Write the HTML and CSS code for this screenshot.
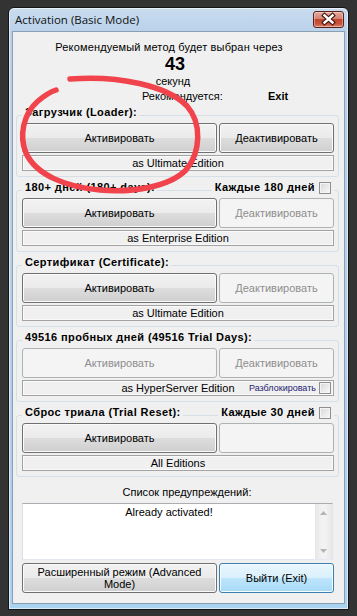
FILE: index.html
```html
<!DOCTYPE html>
<html>
<head>
<meta charset="utf-8">
<link rel="stylesheet" href="styles.css">
</head>
<body>
<div class="screen">
  <div class="window">
    <div class="titlebar">
      <span class="title">Activation (Basic Mode)</span>
      <div class="close">
        <svg width="29" height="15" viewBox="0 0 29 15">
          <path d="M10.5 3.5 L18.5 10.5 M18.5 3.5 L10.5 10.5" stroke="#3d1510" stroke-width="4.6" stroke-linecap="square" fill="none"/>
          <path d="M10.5 3.5 L18.5 10.5 M18.5 3.5 L10.5 10.5" stroke="#ffffff" stroke-width="2.4" stroke-linecap="square" fill="none"/>
        </svg>
      </div>
    </div>
    <div class="client">
      <div class="countdown">
        <div class="cd-line1">Рекомендуемый метод будет выбран через</div>
        <div class="cd-num">43</div>
        <div class="cd-unit">секунд</div>
        <div class="cd-rec"><span class="cd-rec-label">Рекомендуется:</span><b>Exit</b></div>
      </div>

      <div class="group group-first">
        <div class="group-head"><span class="group-title">Загрузчик (Loader):</span></div>
        <div class="btn-row">
          <div class="btn btn-wide">Активировать</div>
          <div class="btn btn-narrow">Деактивировать</div>
        </div>
        <div class="edition">as Ultimate Edition</div>
      </div>

      <div class="group">
        <div class="group-head">
          <span class="group-title">180+ дней (180+ days):</span>
          <span class="group-opt">Каждые 180 дней<span class="check"></span></span>
        </div>
        <div class="btn-row">
          <div class="btn btn-wide">Активировать</div>
          <div class="btn btn-narrow btn-disabled">Деактивировать</div>
        </div>
        <div class="edition">as Enterprise Edition</div>
      </div>

      <div class="group">
        <div class="group-head"><span class="group-title">Сертификат (Certificate):</span></div>
        <div class="btn-row">
          <div class="btn btn-wide">Активировать</div>
          <div class="btn btn-narrow btn-disabled">Деактивировать</div>
        </div>
        <div class="edition">as Ultimate Edition</div>
      </div>

      <div class="group">
        <div class="group-head"><span class="group-title">49516 пробных дней (49516 Trial Days):</span></div>
        <div class="btn-row">
          <div class="btn btn-wide btn-disabled">Активировать</div>
          <div class="btn btn-narrow btn-disabled">Деактивировать</div>
        </div>
        <div class="edition edition-unlock">as HyperServer Edition
          <span class="unlock">Разблокировать<span class="check"></span></span>
        </div>
      </div>

      <div class="group">
        <div class="group-head">
          <span class="group-title">Сброс триала (Trial Reset):</span>
          <span class="group-opt">Каждые 30 дней<span class="check"></span></span>
        </div>
        <div class="btn-row">
          <div class="btn btn-wide">Активировать</div>
          <div class="btn btn-narrow btn-disabled"></div>
        </div>
        <div class="edition">All Editions</div>
      </div>

      <div class="warn-label">Список предупреждений:</div>
      <div class="log">
        <div class="log-text">Already activated!</div>
        <div class="scrollbar">
          <div class="sb-btn"><svg width="7" height="4" viewBox="0 0 7 4"><path d="M0 4 L3.5 0 L7 4 Z" fill="#b4b4b4"/></svg></div>
          <div class="sb-track"></div>
          <div class="sb-btn"><svg width="7" height="4" viewBox="0 0 7 4"><path d="M0 0 L3.5 4 L7 0 Z" fill="#b4b4b4"/></svg></div>
        </div>
      </div>
      <div class="bottom-row">
        <div class="btn btn-wide btn-two">Расширенный режим (Advanced<br>Mode)</div>
        <div class="btn btn-narrow btn-focus">Выйти (Exit)</div>
      </div>
    </div>
  </div>
  <svg class="annotation" width="357" height="616" viewBox="0 0 357 616">
    <path d="M70 79 C 118 75, 168 86, 187 106 C 202 123, 201 152, 186 170 C 169 187, 132 193, 100 190 C 66 187, 36 175, 26 153 C 19 136, 23 114, 38 101 C 44 96, 50 92, 56 90" fill="none" stroke="#f0434c" stroke-width="5.5" stroke-linecap="round"/>
  </svg>
</div>
</body>
</html>
```

FILE: styles.css
```css
* { box-sizing: border-box; }

body {
  margin: 0;
  background: #333333;
}

.screen {
  position: relative;
  width: 357px;
  height: 616px;
  background: #333333;
  padding: 7px 0 0 8px;
  overflow: hidden;
  font-family: "Liberation Sans", Arial, sans-serif;
  font-size: 11px;
  color: #000;
}

.window {
  width: 341px;
  height: 603px;
  border: 1px solid #151515;
  border-radius: 6px 6px 0 0;
  background: linear-gradient(#c9dcef 0px, #b9d1ea 24px, #b4cfea 400px, #a9d3f0 100%);
  box-shadow: inset 0 0 0 1px rgba(255, 255, 255, 0.55);
  display: flex;
  flex-direction: column;
}

.titlebar {
  flex: none;
  height: 23px;
  display: flex;
  justify-content: space-between;
  align-items: flex-start;
  padding: 0 4px 0 6px;
}

.title {
  font-family: "Open Sans", "Noto Sans", sans-serif;
  font-size: 11.5px;
  line-height: 16px;
  margin-top: 4px;
  color: #111;
}

.close {
  width: 31px;
  height: 17px;
  margin-top: 3px;
  border: 1px solid #5b2019;
  border-radius: 3px;
  background: linear-gradient(#e3a99e 0%, #d58371 45%, #c2452f 50%, #c8543e 80%, #dc8a6e 100%);
  box-shadow: inset 0 0 0 1px rgba(255, 255, 255, 0.35);
  display: flex;
  align-items: center;
  justify-content: center;
}

.client {
  flex: none;
  margin: 0 3px;
  height: 573px;
  border: 1px solid #8b9fb4;
  background: #f0f0f0;
}

.countdown {
  padding-top: 9px;
}

.cd-line1 {
  line-height: 13px;
  text-align: center;
  padding-right: 19px;
  letter-spacing: 0.15px;
}

.cd-num {
  font-weight: bold;
  font-size: 18px;
  line-height: 20px;
  text-align: center;
  padding-right: 7px;
}

.cd-unit {
  line-height: 13px;
  margin-top: 1px;
  text-align: center;
  padding-right: 11px;
}

.cd-rec {
  display: flex;
  line-height: 13px;
  margin-top: 2px;
  padding-left: 129px;
}

.cd-rec-label {
  width: 126px;
}

.group {
  margin: 13px 5px 0 3px;
  border: 1px solid #d5dfe5;
  border-radius: 3px;
  padding: 0 4px 5px 5px;
}

.group-first {
  margin-top: 12px;
}

.group-head {
  display: flex;
  justify-content: space-between;
  align-items: center;
  height: 13px;
  margin-top: -10px;
  font-weight: bold;
  line-height: 13px;
  letter-spacing: 0.4px;
}

.group-title {
  background: #f0f0f0;
  padding: 0 2px 0 3px;
}

.group-opt {
  background: #f0f0f0;
  display: flex;
  align-items: center;
  gap: 4px;
  padding: 0 3px 0 3px;
}

.check {
  display: inline-block;
  width: 12px;
  height: 12px;
  border: 1px solid #8e8f8f;
  background: linear-gradient(135deg, #d8d8d8, #f8f8f8);
  box-shadow: inset 0 0 0 1px #f4f4f4;
}

.btn-row {
  display: flex;
  gap: 2px;
  margin-top: 4px;
  height: 30px;
}

.btn {
  border: 1px solid #707070;
  border-radius: 3px;
  background: linear-gradient(#f2f2f2 0%, #ebebeb 50%, #dddddd 50%, #cfcfcf 100%);
  box-shadow: inset 0 0 0 1px #fbfbfb;
  display: flex;
  align-items: center;
  justify-content: center;
  text-align: center;
  line-height: 13px;
}

.btn-wide {
  width: 195px;
  flex: none;
}

.btn-narrow {
  flex: 1;
}

.btn-disabled {
  border-color: #adb2b5;
  background: #f4f4f4;
  box-shadow: none;
  color: #8e8e8e;
}

.btn-focus {
  border-color: #3c7fb1;
  background: linear-gradient(#eaf6fd 0%, #d9f0fc 50%, #bee6fd 50%, #a7d9f5 100%);
  box-shadow: inset 0 0 0 1px #f5fbfe;
}

.btn-two {
  line-height: 12px;
  padding-bottom: 1px;
}

.edition {
  margin-top: 2px;
  height: 16px;
  border: 1px solid #a3a3a3;
  box-shadow: inset 0 0 0 1px #fafafa;
  text-align: center;
  line-height: 14px;
}

.edition-unlock {
  position: relative;
}

.unlock {
  position: absolute;
  right: 2px;
  top: 0;
  height: 14px;
  display: flex;
  align-items: center;
  gap: 3px;
  font-size: 9px;
  color: #1d1d70;
}

.warn-label {
  margin-top: 9px;
  line-height: 13px;
  text-align: center;
  padding-left: 17px;
}

.log {
  margin: 4px 11px 0 9px;
  height: 57px;
  border: 1px solid #dbdfe6;
  border-top-color: #abadb3;
  border-bottom-color: #e3e9ef;
  border-right-color: #e2e3ea;
  background: #fff;
  display: flex;
}

.log-text {
  flex: 1;
  text-align: center;
  line-height: 13px;
  padding-top: 2px;
}

.scrollbar {
  width: 17px;
  display: flex;
  flex-direction: column;
  background: linear-gradient(90deg, #e7e7e7, #f2f2f2 40%, #f2f2f2 60%, #e7e7e7);
}

.sb-btn {
  height: 17px;
  display: flex;
  align-items: center;
  justify-content: center;
}

.sb-track {
  flex: 1;
}

.bottom-row {
  display: flex;
  gap: 2px;
  margin: 3px 10px 0 9px;
  height: 30px;
}

.annotation {
  position: absolute;
  left: 0;
  top: 0;
  pointer-events: none;
}
```
